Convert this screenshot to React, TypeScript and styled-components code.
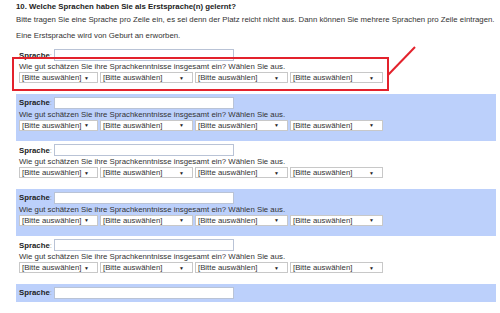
import styled, { createGlobalStyle } from "styled-components";

const GlobalStyle = createGlobalStyle`
  html, body {
    margin: 0;
    padding: 0;
    background: #ffffff;
  }
  body {
    font-family: "Liberation Sans", Arial, sans-serif;
    color: #333333;
  }
`;

const Page = styled.div`
  position: relative;
  width: 500px;
  height: 313px;
  overflow: hidden;
  padding-left: 16px;
  box-sizing: border-box;
`;

const Title = styled.div`
  font-size: 7.8px;
  font-weight: 700;
  color: #222222;
  line-height: 10px;
  padding-top: 2px;
`;

const Hint = styled.div`
  font-size: 7.8px;
  line-height: 10px;
  margin-top: 3px;
  white-space: nowrap;
`;

const HintSecond = styled(Hint)`
  margin-top: 6px;
`;

const List = styled.div`
  width: 480px;
  margin-top: 5px;
`;

const Block = styled.div<{ $blue: boolean; $short?: boolean }>`
  box-sizing: border-box;
  height: ${(p) => (p.$short ? "18px" : "47.6px")};
  padding: 3px 3px 0 3px;
  background: ${(p) => (p.$blue ? "#bcd0fb" : "#ffffff")};
`;

const LangRow = styled.div`
  display: flex;
  align-items: center;
  height: 12px;
`;

const Label = styled.span`
  font-size: 7.8px;
  font-weight: 700;
  color: #222222;
  width: 35px;
`;

const Colon = styled.span`
  font-weight: 400;
  color: #9a9a9a;
`;

const TextInput = styled.div`
  box-sizing: border-box;
  width: 180px;
  height: 12px;
  background: #ffffff;
  border: 1px solid #b9c3d6;
`;

const Question = styled.div`
  font-size: 7.8px;
  line-height: 11px;
  margin-top: 0;
  white-space: nowrap;
`;

const SelectRow = styled.div`
  display: flex;
  gap: 2px;
`;

const SelectBox = styled.div<{ $w: number }>`
  box-sizing: border-box;
  width: ${(p) => p.$w}px;
  height: 11px;
  display: flex;
  align-items: center;
  justify-content: space-between;
  padding: 0 8px 0 2px;
  background: #ffffff;
  border: 1px solid #c8c8c8;
  font-size: 7.8px;
  color: #333333;
  white-space: nowrap;
`;

const Arrow = styled.span`
  font-size: 5px;
  color: #222222;
`;

const Highlight = styled.div`
  position: absolute;
  left: 12px;
  top: 57px;
  width: 377px;
  height: 34px;
  box-sizing: border-box;
  border: 2px solid #e3222c;
  pointer-events: none;
`;

const Pointer = styled.svg`
  position: absolute;
  left: 386px;
  top: 44px;
  pointer-events: none;
`;

const selectWidths = [79, 93, 93, 93];

function LanguageBlock({ blue, short }: { blue: boolean; short?: boolean }) {
  return (
    <Block $blue={blue} $short={short}>
      <LangRow>
        <Label>
          Sprache<Colon>:</Colon>
        </Label>
        <TextInput />
      </LangRow>
      {!short && (
        <>
          <Question>
            Wie gut schätzen Sie ihre Sprachkenntnisse insgesamt ein? Wählen Sie aus.
          </Question>
          <SelectRow>
            {selectWidths.map((w, i) => (
              <SelectBox key={i} $w={w}>
                <span>[Bitte auswählen]</span>
                <Arrow>▼</Arrow>
              </SelectBox>
            ))}
          </SelectRow>
        </>
      )}
    </Block>
  );
}

export default function App() {
  return (
    <>
      <GlobalStyle />
      <Page>
        <Title>10. Welche Sprachen haben Sie als Erstsprache(n) gelernt?</Title>
        <Hint>
          Bitte tragen Sie eine Sprache pro Zeile ein, es sei denn der Platz reicht nicht aus. Dann
          können Sie mehrere Sprachen pro Zeile eintragen.
        </Hint>
        <HintSecond>Eine Erstsprache wird von Geburt an erworben.</HintSecond>
        <List>
          <LanguageBlock blue={false} />
          <LanguageBlock blue />
          <LanguageBlock blue={false} />
          <LanguageBlock blue />
          <LanguageBlock blue={false} />
          <LanguageBlock blue short />
        </List>
        <Highlight />
        <Pointer width="32" height="34" viewBox="0 0 32 34">
          <line x1="2" y1="31" x2="29" y2="3" stroke="#e3222c" strokeWidth="2" />
        </Pointer>
      </Page>
    </>
  );
}
